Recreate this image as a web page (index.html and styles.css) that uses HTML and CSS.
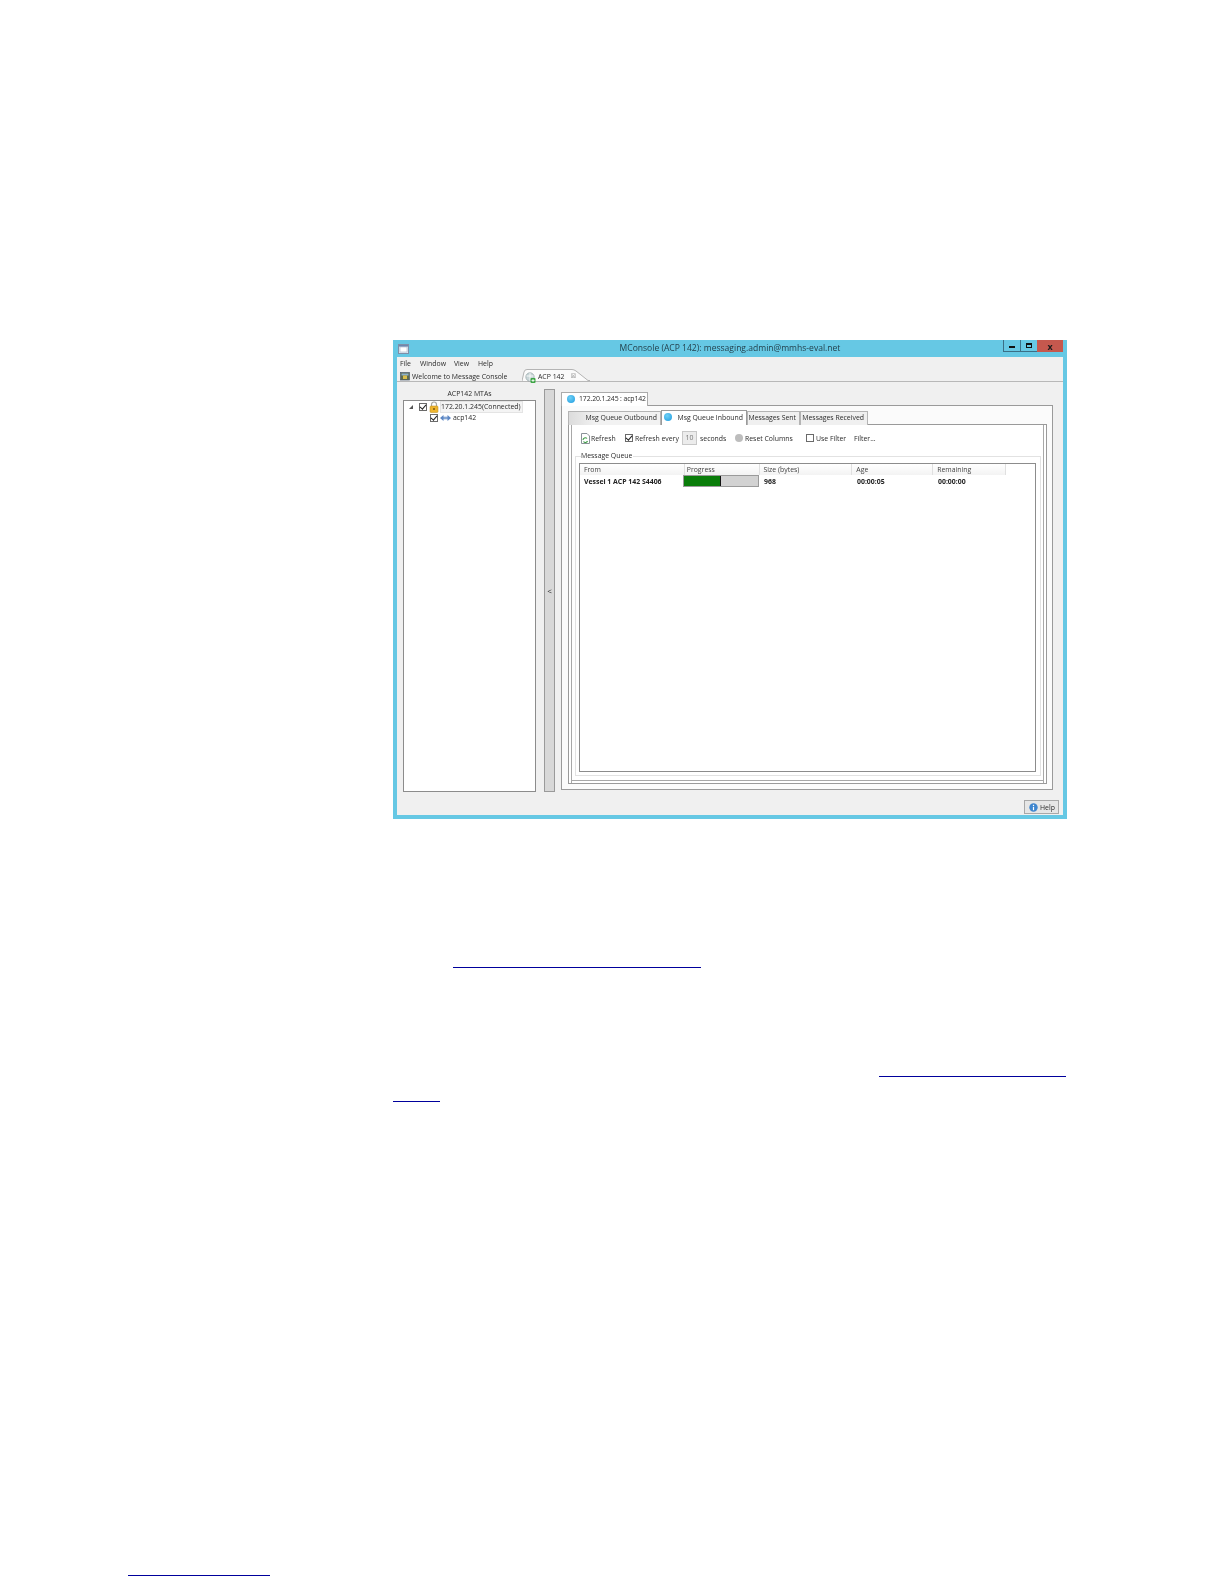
FILE: index.html
```html
<!DOCTYPE html>
<html>
<head>
    <title>MConsole (ACP 142)</title>
    <link rel="stylesheet" href="styles.css">
</head>
<body>
    <div class="window">
        <div class="titlebar">
            <svg class="app-icon" width="11" height="10" viewBox="0 0 11 10"><rect x=".5" y=".5" width="10" height="9" fill="#dfe8f2" stroke="#7f8fa8"/><rect x="2" y="3" width="7" height="5" fill="#fff" stroke="#a9b6c9" stroke-width=".6"/><rect x="1" y="1" width="9" height="1.6" fill="#6d86ad"/></svg>
            <div class="title">MConsole (ACP 142): messaging.admin@mmhs-eval.net</div>
            <div class="controls">
                <div class="ctl"><span class="min-mark"></span></div>
                <div class="ctl"><span class="max-mark"></span></div>
                <div class="ctl ctl-close">x</div>
            </div>
        </div>
        <div class="client">
            <div class="menu">
                <span>File</span><span>Window</span><span>View</span><span>Help</span>
            </div>
            <div class="doc-tabs">
                <div class="doc-tab">
                    <svg width="10" height="10" viewBox="0 0 10 10"><rect x=".5" y="1.5" width="9" height="7.5" fill="#5f6b4a" stroke="#4b5a6d" stroke-width=".7"/><rect x="1.5" y="2.5" width="7" height="2" fill="#8cb0cc"/><rect x="3" y="4.5" width="4" height="3.5" fill="#d9bd4a"/></svg>
                    Welcome to Message Console
                </div>
                <div class="doc-tab doc-tab-active">
                    <svg class="tab-shape" width="68" height="12" viewBox="0 0 68 12"><path d="M0 12 L2 3 Q2.500 .5 5 .5 L50 .5 Q52 .5 54 2 L66 11.500 L68 11.500" fill="#fbfbfb" stroke="#b4b4b4"/></svg>
                    <svg class="tab-icon" width="11" height="11" viewBox="0 0 11 11"><circle cx="5" cy="5" r="4.200" fill="#c9d6d8" stroke="#8a9a9c" stroke-width=".6"/><path d="M1.500 4 H8.500 M5 1 V9" stroke="#fff" stroke-width=".8"/><rect x="5.500" y="6" width="5" height="5" rx="1" fill="#3da545"/><path d="M8 7 V10 M6.500 8.500 H9.500" stroke="#fff" stroke-width=".8"/></svg>
                    <span class="doc-tab-label">ACP 142</span>
                    <span class="doc-tab-x">&#8864;</span>
                </div>
            </div>
            <div class="main">
                <div class="left-pane">
                    <div class="pane-title">ACP142 MTAs</div>
                    <div class="tree">
                        <div class="tree-row tree-row-1">
                            <span class="expander"></span>
                            <span class="check checked"></span>
                            <svg width="10" height="12" viewBox="0 0 10 12"><path d="M2.500 5 V3.500 a2.500 2.500 0 0 1 5 0 V5" fill="none" stroke="#a8a8a0" stroke-width="1.200"/><rect x="1" y="5" width="8" height="6.500" rx="1" fill="#eeb52e" stroke="#b98a1c" stroke-width=".5"/><circle cx="5" cy="8" r="1" fill="#7a5a10"/></svg>
                            <span class="tree-label selected">172.20.1.245(Connected)</span>
                        </div>
                        <div class="tree-row tree-row-2">
                            <span class="check checked"></span>
                            <svg width="11" height="8" viewBox="0 0 11 8"><path d="M0 4 L3.500 1 V2.800 H7.500 V1 L11 4 L7.500 7 V5.200 H3.500 V7 Z" fill="#5b86c4"/><path d="M3.500 4 H7.500" stroke="#c8d8ee" stroke-width=".8"/></svg>
                            <span class="tree-label">acp142</span>
                        </div>
                    </div>
                </div>
                <div class="splitter">&lt;</div>
                <div class="right-pane">
                    <div class="host-tab">
                        <span class="dot"></span>172.20.1.245 : acp142
                    </div>
                    <div class="host-panel">
                        <div class="queue-tabs">
                            <div class="queue-tab queue-tab-first">Msg Queue Outbound</div>
                            <div class="queue-tab queue-tab-active"><span class="dot"></span>Msg Queue Inbound</div>
                            <div class="queue-tab queue-tab-sent">Messages Sent</div>
                            <div class="queue-tab queue-tab-recv">Messages Received</div>
                        </div>
                        <div class="queue-panel">
                            <div class="toolbar">
                                <svg class="refresh-icon" width="9" height="11" viewBox="0 0 9 11"><path d="M.5 .5 H6 L8.500 3 V10.500 H.5 Z" fill="#fff" stroke="#8a9298"/><path d="M2 7 a2.300 2.300 0 0 1 4 -1.500 M6.500 8 a2.300 2.300 0 0 1 -4 .5" fill="none" stroke="#3a9a42" stroke-width="1.100"/></svg>
                                <span class="tb-refresh">Refresh</span>
                                <span class="check checked tb-check"></span>
                                <span class="tb-every">Refresh every</span>
                                <span class="num-box">10</span>
                                <span class="tb-seconds">seconds</span>
                                <span class="radio"></span>
                                <span class="tb-reset">Reset Columns</span>
                                <span class="check tb-filter-check"></span>
                                <span class="tb-use">Use Filter</span>
                                <span class="tb-filter">Filter...</span>
                            </div>
                            <div class="group">
                                <div class="group-label">Message Queue</div>
                                <div class="table">
                                    <div class="thead">
                                        <div class="th th-from">From</div>
                                        <div class="th th-progress">Progress</div>
                                        <div class="th th-size">Size (bytes)</div>
                                        <div class="th th-age">Age</div>
                                        <div class="th th-rem">Remaining</div>
                                    </div>
                                    <div class="tr">
                                        <div class="td td-from">Vessel 1 ACP 142 S4406</div>
                                        <div class="td-bar"><div class="bar-fill"></div></div>
                                        <div class="td th-size">968</div>
                                        <div class="td th-age">00:00:05</div>
                                        <div class="td th-rem">00:00:00</div>
                                    </div>
                                </div>
                            </div>
                        </div>
                    </div>
                </div>
            </div>
            <div class="footer">
                <div class="help-btn">
                    <svg width="9" height="9" viewBox="0 0 9 9"><circle cx="4.500" cy="4.500" r="4.200" fill="#3f86cf"/><rect x="3.900" y="3.800" width="1.200" height="3.400" fill="#fff"/><rect x="3.900" y="1.800" width="1.200" height="1.200" fill="#fff"/></svg>
                    Help
                </div>
            </div>
        </div>
    </div>

    <div class="link-line link-1"></div>
    <div class="link-line link-2"></div>
    <div class="link-line link-3"></div>
    <div class="link-line link-4"></div>
</body>
</html>
```

FILE: styles.css
```css
html, body {
    margin: 0;
    background: #fff;
}
body {
    width: 1224px;
    height: 1584px;
    padding-top: 340px;
    box-sizing: border-box;
    overflow: hidden;
    font-family: "Open Sans", "Noto Sans", sans-serif;
    font-size: 6.9px;
    color: #2b2b2b;
}

.window {
    margin-left: 393px;
    width: 674px;
    height: 479px;
    box-sizing: border-box;
    padding: 0 4px 4px 4px;
    background: #66c8e4;
    filter: blur(.3px);
}
.titlebar {
    height: 17px;
    display: grid;
    grid-template-columns: 1fr auto 1fr;
    align-items: start;
}
.app-icon {
    margin: 4px 0 0 1px;
}
.title {
    font-size: 8.55px;
    line-height: 17px;
    color: #24424e;
}
.controls {
    display: flex;
    justify-self: end;
}
.ctl {
    width: 17px;
    height: 12px;
    box-sizing: border-box;
    border: 1px solid #3b6f86;
    border-top: 0;
    border-right: 0;
    display: flex;
    align-items: center;
    justify-content: center;
}
.ctl-close {
    width: 26px;
    background: #c5584e;
    border: 0;
    font-weight: bold;
    font-size: 9px;
    color: #1c1c1c;
}
.min-mark {
    width: 6px;
    height: 2px;
    margin-top: 3px;
    background: #111;
}
.max-mark {
    width: 6px;
    height: 5px;
    box-sizing: border-box;
    border: 1px solid #111;
    border-top-width: 2px;
}

.client {
    height: 458px;
    background: #f0f0f0;
}
.menu {
    height: 12px;
    display: flex;
    padding-left: 3px;
    line-height: 14px;
}
.menu span:nth-child(1) { width: 20px; }
.menu span:nth-child(2) { width: 34px; }
.menu span:nth-child(3) { width: 24px; }

.doc-tabs {
    height: 13px;
    box-sizing: border-box;
    border-bottom: 1px solid #b8b8b8;
    display: flex;
}
.doc-tab {
    display: flex;
    align-items: center;
    gap: 2px;
    padding: 1px 0 0 3px;
    width: 125px;
    height: 13px;
    box-sizing: border-box;
    white-space: nowrap;
}
.doc-tab-active {
    position: relative;
    width: 68px;
    padding-left: 3px;
}
.tab-shape {
    position: absolute;
    left: 0;
    top: 0;
}
.tab-icon, .doc-tab-label, .doc-tab-x {
    position: relative;
}
.tab-icon {
    margin-top: 2px;
}
.doc-tab-x {
    color: #aaa;
    margin-left: 4px;
    font-family: "DejaVu Sans", sans-serif;
}

.main {
    height: 413px;
    display: flex;
    padding-left: 6px;
}
.left-pane {
    width: 133px;
}
.pane-title {
    height: 18px;
    line-height: 24px;
    text-align: center;
}
.tree {
    height: 392px;
    box-sizing: border-box;
    background: #fff;
    border: 1px solid #8c8c8c;
}
.tree-row {
    display: flex;
    align-items: center;
    height: 10px;
    gap: 2px;
}
.tree-row-1 {
    height: 11px;
    padding-left: 5px;
}
.tree-row-2 {
    margin-top: 1px;
    padding-left: 26px;
}
.expander {
    width: 0;
    height: 0;
    margin-right: 4px;
    border-left: 4px solid transparent;
    border-bottom: 4px solid #555;
}
.check {
    display: inline-block;
    width: 8px;
    height: 8px;
    flex: none;
    box-sizing: border-box;
    background: #fff;
    border: 1px solid #6a6a6a;
    position: relative;
}
.checked::after {
    content: "";
    position: absolute;
    left: 1px;
    top: -1px;
    width: 2.500px;
    height: 5px;
    border-right: 1.300px solid #222;
    border-bottom: 1.300px solid #222;
    transform: rotate(40deg);
}
.selected {
    background: #f4f4f4;
    outline: 1px solid #e4e4e4;
    padding-right: 1px;
    white-space: nowrap;
}
.tree-label {
    line-height: 10px;
}

.splitter {
    width: 11px;
    height: 403px;
    margin: 7px 0 0 8px;
    box-sizing: border-box;
    background: #d8d8d8;
    border: 1px solid #9a9a9a;
    display: flex;
    align-items: center;
    justify-content: center;
    font-size: 8px;
}

.right-pane {
    width: 492px;
    margin-left: 6px;
    padding-top: 10px;
}
.dot {
    display: inline-block;
    flex: none;
    width: 8px;
    height: 8px;
    border-radius: 50%;
    background: radial-gradient(circle at 40% 35%, #6fd0f5, #1d9be0);
}
.host-tab {
    width: 87px;
    height: 14px;
    box-sizing: border-box;
    border: 1px solid #ababab;
    border-bottom: 0;
    background: #fff;
    display: flex;
    align-items: center;
    gap: 4px;
    padding: 0 0 2px 5px;
    margin-bottom: -1px;
    position: relative;
    white-space: nowrap;
    letter-spacing: -.12px;
}
.host-panel {
    height: 385px;
    box-sizing: border-box;
    border: 1px solid #9a9a9a;
    padding: 5px 5px 0 6px;
    background: #fbfbfb;
}
.queue-tabs {
    display: flex;
    height: 14px;
    margin-bottom: -1px;
    position: relative;
    align-items: flex-end;
}
.queue-tab {
    height: 14px;
    box-sizing: border-box;
    border: 1px solid #b4b4b4;
    border-bottom: 0;
    background: #f0f0f0;
    display: flex;
    align-items: center;
    justify-content: flex-end;
    white-space: nowrap;
    padding: 0 3px 2px 0;
}
.queue-tab-first {
    width: 93px;
    background: linear-gradient(90deg, #dcdcdc, #f2f2f2 30%);
}
.queue-tab-active {
    width: 86px;
    height: 15px;
    background: #fff;
    border-color: #9a9a9a;
    gap: 5px;
}
.queue-tab-sent {
    width: 53px;
}
.queue-tab-recv {
    width: 68px;
}
.queue-panel {
    height: 360px;
    box-sizing: border-box;
    background: #fff;
    border: 1px solid #9a9a9a;
    box-shadow: inset 2px 0 #fff, inset 3px 0 #a8a8a8, inset -2px 0 #fff, inset -3px 0 #a8a8a8, inset 0 -2px #fff, inset 0 -3px #a8a8a8;
    padding: 6px 5px 0 6px;
}

.toolbar {
    height: 14px;
    display: flex;
    align-items: center;
    white-space: nowrap;
}
.refresh-icon { margin-left: 6px; }
.tb-refresh { margin-left: 1px; width: 34px; }
.tb-every { margin-left: 2px; width: 47px; }
.num-box {
    width: 15px;
    height: 14px;
    box-sizing: border-box;
    background: #ececec;
    border: 1px solid #c8c8c8;
    text-align: center;
    line-height: 12px;
    color: #777;
}
.tb-seconds { margin-left: 3px; width: 35px; }
.radio {
    width: 8px;
    height: 8px;
    border-radius: 50%;
    background: #bdbdbd;
    border: 0;
}
.tb-reset { margin-left: 2px; width: 61px; }
.tb-use { margin-left: 2px; width: 38px; }

.group {
    margin-top: 11px;
    height: 320px;
    box-sizing: border-box;
    border: 1px solid #e2e2e2;
    position: relative;
    padding: 6px 4px 3px 3px;
}
.group-label {
    position: absolute;
    left: 5px;
    top: -6px;
    background: #fff;
    padding-right: 1px;
    line-height: 10px;
}
.table {
    height: 100%;
    box-sizing: border-box;
    border: 1px solid #8c8c8c;
    background: #fff;
}
.thead {
    display: flex;
    height: 11px;
    width: 426px;
    background: linear-gradient(#fff, #f3f3f3);
}
.th {
    box-sizing: border-box;
    padding-left: 4px;
    line-height: 11px;
    border-right: 1px solid #e0e0e0;
    color: #444;
}
.th-from { width: 105px; }
.th-progress { width: 75px; padding-left: 2px; }
.th-size { width: 93px; }
.th-age { width: 81px; }
.th-rem { width: 73px; }
.tr {
    display: flex;
    height: 13px;
}
.td {
    box-sizing: border-box;
    padding-left: 4px;
    line-height: 13px;
    font-weight: bold;
    color: #222;
    white-space: nowrap;
}
.td.th-size, .td.th-age, .td.th-rem { border: 0; }
.td-from { width: 103px; }
.td-bar {
    width: 76px;
    height: 12px;
    margin-right: 1px;
    box-sizing: border-box;
    background: #d2d2d2;
    border: 1px solid #9a9a9a;
}
.bar-fill {
    width: 37px;
    height: 100%;
    box-sizing: border-box;
    background: #0a7d0a;
    border-right: 1px solid #111;
}

.footer {
    height: 20px;
    display: flex;
    justify-content: flex-end;
    padding: 5px 4px 0 0;
    box-sizing: border-box;
}
.help-btn {
    width: 35px;
    height: 14px;
    box-sizing: border-box;
    border: 1px solid #a8a8a8;
    background: #e6e6e6;
    display: flex;
    align-items: center;
    gap: 2px;
    padding-left: 4px;
}

.link-line {
    height: 1px;
    background: #00009c;
}
.link-1 {
    width: 248px;
    margin: 148px 0 0 453px;
}
.link-2 {
    width: 187px;
    margin: 108px 0 0 879px;
}
.link-3 {
    width: 47px;
    margin: 24px 0 0 393px;
}
.link-4 {
    width: 142px;
    margin: 473px 0 0 128px;
}
```
